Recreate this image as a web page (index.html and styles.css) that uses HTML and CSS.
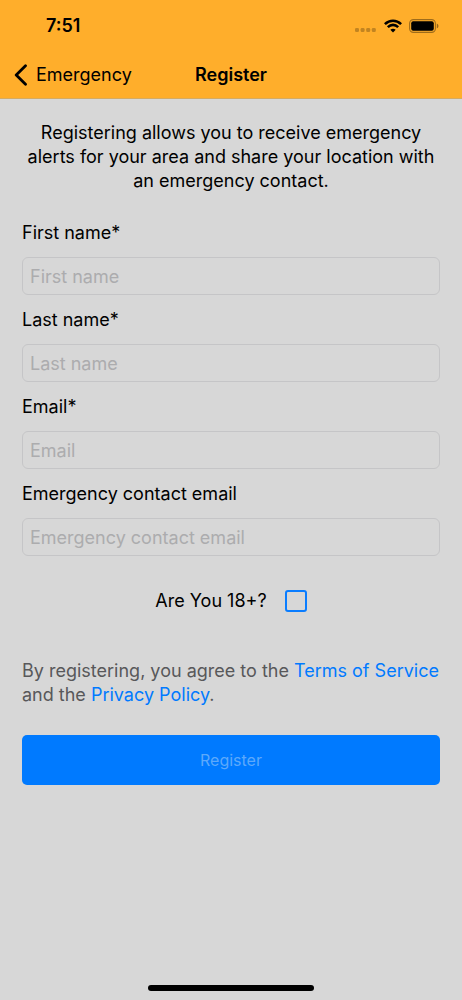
FILE: index.html
```html
<!DOCTYPE html>
<html lang="en">
<head>
<meta charset="utf-8">
<meta name="viewport" content="width=device-width, initial-scale=1">
<title>Register</title>
<link rel="stylesheet" href="styles.css">
</head>
<body class="screen">
<header class="top">
  <div class="status">
    <span class="time">7:51</span>
    <span class="indicators">
      <svg class="dots" width="22" height="16" viewBox="0 0 22 16" fill="#000" fill-opacity=".24" aria-hidden="true"><rect x="0" y="10" width="4" height="4" rx="1.3"/><rect x="5.6" y="10" width="4" height="4" rx="1.3"/><rect x="11.2" y="10" width="4" height="4" rx="1.3"/><rect x="16.8" y="10" width="4" height="4" rx="1.3"/></svg>
      <svg class="wifi" width="18" height="14" viewBox="0 0 18 14" aria-hidden="true"><g fill="none" stroke="#000" stroke-width="2.6"><path d="M.9 5.1Q4.5 1.7 9 1.7T17.1 5.1"/><path d="M3.8 8.1Q6.2 5.9 9 5.9T14.2 8.1"/></g><path d="M6.3 10.8Q9 8.6 11.7 10.8L9 13.5Z"/></svg>
      <svg class="battery" width="30" height="14" viewBox="0 0 30 14" aria-hidden="true"><rect x=".6" y=".6" width="25.8" height="12.8" rx="3.8" fill="none" stroke="#000" stroke-opacity=".38" stroke-width="1.1"/><rect x="2.2" y="2.2" width="22.6" height="9.6" rx="2"/><path d="M27.8 4.6Q29.5 5.2 29.5 7T27.8 9.4Z" fill-opacity=".42"/></svg>
    </span>
  </div>
  <nav class="nav">
    <a class="back" href="#"><svg width="14" height="22" viewBox="0 0 14 22" fill="none" stroke="#000" stroke-width="2.8" stroke-linecap="round" stroke-linejoin="round" aria-hidden="true"><path d="M11.5 1.8 2.2 11l9.3 9.2"/></svg>Emergency</a>
    <h1 class="title">Register</h1>
  </nav>
</header>
<main class="content">
  <p class="intro">Registering allows you to receive emergency alerts for your area and share your location with an emergency contact.</p>
  <form class="form">
    <div class="field"><label for="first">First name*</label><input class="text" id="first" type="text" placeholder="First name"></div>
    <div class="field"><label for="last">Last name*</label><input class="text" id="last" type="text" placeholder="Last name"></div>
    <div class="field"><label for="email">Email*</label><input class="text" id="email" type="email" placeholder="Email"></div>
    <div class="field"><label for="contact">Emergency contact email</label><input class="text" id="contact" type="email" placeholder="Emergency contact email"></div>
    <div class="age"><label for="adult">Are You 18+?</label><input class="check" id="adult" type="checkbox"></div>
    <p class="terms">By registering, you agree to the <a href="#">Terms of Service</a> and the <a href="#">Privacy Policy</a>.</p>
    <button class="submit" type="submit" disabled>Register</button>
  </form>
</main>
<footer class="home"><div class="bar"></div></footer>
</body>
</html>
```
FILE: styles.css
```css
* { box-sizing: border-box; }
.screen {
  margin: 0;
  min-height: 100vh;
  display: flex;
  flex-direction: column;
  background: #d7d7d7;
  color: #000;
  font: 18px/24px Inter, "Liberation Sans", sans-serif;
}
.top { background: #ffae2b; border-bottom: 1px solid #d5ab63; }
.status {
  display: flex;
  justify-content: space-between;
  align-items: center;
  height: 52px;
  padding: 0 23px 0 46px;
}
.time { font-weight: 600; }
.indicators { display: flex; align-items: center; gap: 7px; }
.nav {
  display: grid;
  grid-template-columns: 1fr auto 1fr;
  align-items: center;
  height: 46px;
  padding: 0 14px;
}
.back {
  display: flex;
  align-items: center;
  gap: 8px;
  color: #000;
  text-decoration: none;
}
.title { margin: 0; font-size: 18px; font-weight: 600; }
.content { flex: 1; padding: 22px 22px 0; }
.intro { margin: 0 0 28px; text-align: center; }
.form { display: flex; flex-direction: column; gap: 13px; }
.field { display: flex; flex-direction: column; gap: 12px; }
.text {
  width: 100%;
  height: 38px;
  padding: 0 7px;
  border: 1px solid #c5c5c7;
  border-radius: 6px;
  background: transparent;
  color: #000;
  font: inherit;
}
.text::placeholder { color: #acacae; opacity: 1; }
.age {
  display: flex;
  justify-content: center;
  align-items: center;
  gap: 18px;
  margin-top: 20px;
}
.check {
  appearance: none;
  width: 22px;
  height: 22px;
  margin: 0;
  border: 2px solid #0a7dff;
  border-radius: 3px;
}
.terms { margin: 33px 0 15px; color: #58585a; }
.terms a { color: #007aff; text-decoration: none; }
.submit {
  height: 50px;
  border: 0;
  border-radius: 5px;
  background: #007aff;
  color: #5da9fb;
  font: inherit;
  font-size: 16px;
}
.home { display: flex; justify-content: center; padding: 16px 0 9px; }
.bar { width: 36%; height: 6px; border-radius: 3px; background: #000; }
```
